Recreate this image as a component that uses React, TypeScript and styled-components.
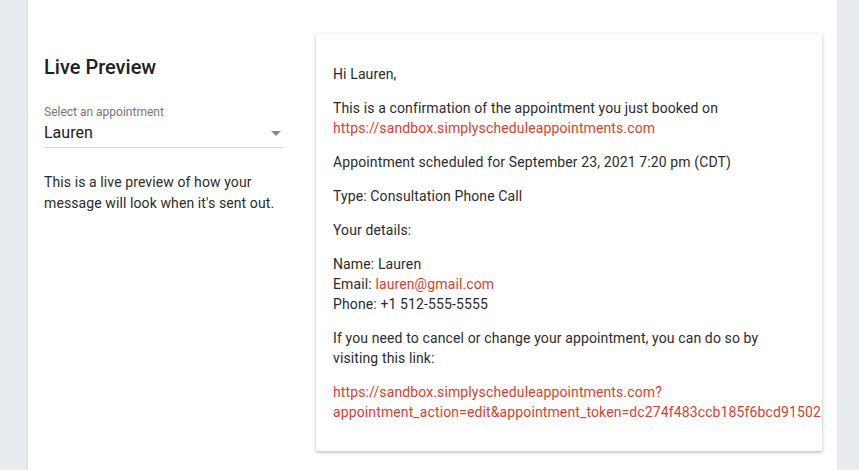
import styled, { createGlobalStyle } from 'styled-components';

const GlobalStyle = createGlobalStyle`
  html, body {
    margin: 0;
    padding: 0;
    background: #e8ecef;
    font-family: Roboto, "Liberation Sans", Arial, sans-serif;
  }
`;

const Page = styled.div`
  height: 470px;
  overflow: hidden;
  padding-left: 28px;
`;

const Panel = styled.main`
  width: 809px;
  height: 470px;
  background: #ffffff;
  box-shadow: -1px 0 2px rgba(0, 0, 0, 0.08);
  display: grid;
  grid-template-columns: 240px 506px;
  column-gap: 32px;
  align-items: start;
  padding: 34px 15px 0 16px;
  box-sizing: border-box;
`;

const Sidebar = styled.section`
  padding-top: 19px;
`;

const Heading = styled.h2`
  margin: 0;
  font-size: 20px;
  line-height: 28px;
  font-weight: 500;
  color: #212121;
`;

const Field = styled.div`
  margin-top: 24px;
  border-bottom: 1px solid #dcdcdc;
  padding-bottom: 3px;
`;

const FieldLabel = styled.label`
  display: block;
  font-size: 12px;
  line-height: 14px;
  color: #757575;
`;

const SelectRow = styled.div`
  display: flex;
  align-items: center;
  justify-content: space-between;
  height: 24px;
  margin-top: 1px;
  font-size: 16px;
  color: #212121;
`;

const Caret = styled.span`
  width: 0;
  height: 0;
  margin-right: 3px;
  margin-top: 2px;
  border-left: 5px solid transparent;
  border-right: 5px solid transparent;
  border-top: 5px solid #8a8a8a;
`;

const Hint = styled.p`
  margin: 24px 0 0;
  font-size: 14px;
  line-height: 21px;
  letter-spacing: 0.1px;
  color: #2b2b2b;
`;

const Card = styled.article`
  height: 417px;
  background: #ffffff;
  border-radius: 2px;
  box-shadow: 0 1px 4px rgba(0, 0, 0, 0.22), 0 2px 2px rgba(0, 0, 0, 0.08);
  overflow: hidden;
  padding: 16px 60px 16px 17px;
  box-sizing: border-box;
  font-size: 14px;
  line-height: 20px;
  letter-spacing: 0.12px;
  color: #2b2b2b;
`;

const Para = styled.p`
  margin: 14px 0;
`;

const Link = styled.a<{ $nowrap?: boolean }>`
  color: #d9412e;
  text-decoration: none;
  white-space: ${(p) => (p.$nowrap ? 'nowrap' : 'normal')};
`;

export default function App() {
  return (
    <>
      <GlobalStyle />
      <Page>
        <Panel>
          <Sidebar>
            <Heading>Live Preview</Heading>
            <Field>
              <FieldLabel>Select an appointment</FieldLabel>
              <SelectRow>
                Lauren
                <Caret />
              </SelectRow>
            </Field>
            <Hint>
              This is a live preview of how your message will look when it's sent out.
            </Hint>
          </Sidebar>

          <Card>
            <Para>Hi Lauren,</Para>
            <Para>
              This is a confirmation of the appointment you just booked on{' '}
              <Link href="#">https://sandbox.simplyscheduleappointments.com</Link>
            </Para>
            <Para>Appointment scheduled for September 23, 2021 7:20 pm (CDT)</Para>
            <Para>Type: Consultation Phone Call</Para>
            <Para>Your details:</Para>
            <Para>
              Name: Lauren
              <br />
              Email: <Link href="#">lauren@gmail.com</Link>
              <br />
              Phone: +1 512-555-5555
            </Para>
            <Para>
              If you need to cancel or change your appointment, you can do so by visiting
              this link:
            </Para>
            <Para>
              <Link href="#" $nowrap>
                https://sandbox.simplyscheduleappointments.com?
                <br />
                appointment_action=edit&amp;appointment_token=dc274f483ccb185f6bcd91502
              </Link>
            </Para>
          </Card>
        </Panel>
      </Page>
    </>
  );
}
